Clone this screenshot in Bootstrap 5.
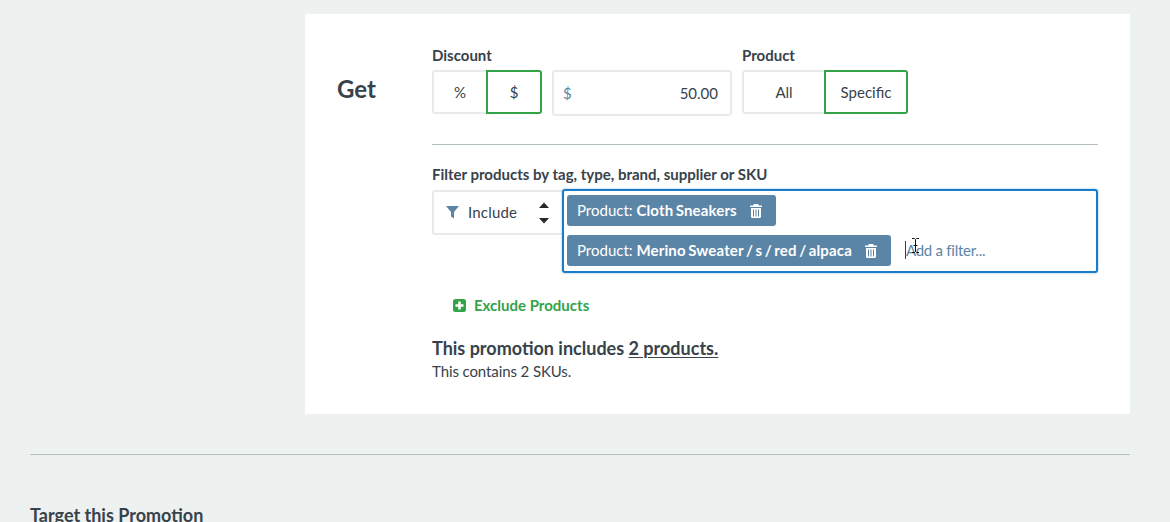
<!DOCTYPE html>
<html>
<head>
    <title>Promotion</title>
    <link href="https://cdn.jsdelivr.net/npm/bootstrap@5.3.2/dist/css/bootstrap.min.css" rel="stylesheet">
    <script src="https://cdn.jsdelivr.net/npm/bootstrap@5.3.2/dist/js/bootstrap.bundle.min.js"></script>
    <style>
        body {
            background-color: #edf1f0;
            color: #37424a;
            font-family: "Lato", "Liberation Sans", sans-serif;
            font-size: 15px;
            height: 522px;
            overflow: hidden;
        }
        .page-wrap {
            padding: 14px 40px 0 30px;
        }
        .promo-panel {
            margin-left: 275px;
            height: 400px;
            background: #fff;
            padding: 32px 32px 0 32px;
        }
        .get-title {
            width: 95px;
            flex: none;
            font-size: 24px;
            font-weight: 700;
            line-height: 28px;
            padding-top: 29px;
        }
        .field-label {
            font-weight: 700;
            font-size: 15px;
            line-height: 18px;
            margin-bottom: 6px;
        }
        .seg-group {
            display: flex;
            height: 44px;
        }
        .seg-btn {
            display: flex;
            align-items: center;
            justify-content: center;
            background: #fff;
            border: 2px solid #e7ebee;
            border-radius: 3px 0 0 3px;
            color: #37424a;
            padding: 0;
            font-size: 15px;
        }
        .seg-btn.picked {
            border-color: #34a249;
            border-radius: 0 3px 3px 0;
        }
        .w-pct { width: 54px; border-right: 0; }
        .w-usd { width: 56px; }
        .w-all { width: 82px; border-right: 0; }
        .w-spec { width: 84px; }
        .amount-box {
            width: 180px;
            height: 46px;
            margin-left: 10px;
            margin-right: 10px;
            border: 2px solid #e7ebee;
            border-radius: 3px;
            padding: 0 12px 0 9px;
        }
        .amount-unit { color: #5b85a6; }
        .head-row { height: 69px; }
        .rule-line {
            margin: 29px 0 20px;
            border: 0;
            border-top: 1px solid #b4bfc4;
            opacity: 1;
        }
        .include-box {
            width: 130px;
            height: 45px;
            flex: none;
            margin-top: 1px;
            border: 2px solid #e7ebee;
            border-right: 0;
            border-radius: 3px 0 0 3px;
            padding: 0 12px 0 12px;
        }
        .include-text {
            margin-left: 1px;
            letter-spacing: .2px;
        }
        .filter-box {
            flex: 1;
            height: 84px;
            border: 2px solid #1a7bc9;
            border-radius: 3px;
            padding: 4px 3px;
            position: relative;
            box-shadow: 0 0 2px rgba(26, 123, 201, .6);
        }
        .tag-row { margin-bottom: 9px; }
        .filter-tag {
            display: inline-flex;
            align-items: center;
            height: 31px;
            padding: 0 14px 0 10px;
            background: #5b85a6;
            color: #fff;
            border-radius: 3px;
        }
        .filter-tag b {
            font-weight: 700;
            letter-spacing: .14px;
            word-spacing: -1.3px;
        }
        .filter-tag svg { margin-left: 13px; }
        .filter-hint {
            color: #5b85a6;
            margin-left: 14px;
            margin-bottom: 2px;
            border-left: 1px solid #37424a;
            line-height: 18px;
            letter-spacing: -.25px;
        }
        .cursor-mark {
            position: absolute;
            left: 347px;
            top: 47px;
        }
        .exclude-link {
            color: #34a249;
            font-weight: 700;
            font-size: 15px;
            margin: 22px 0 0 21px;
            line-height: 20px;
        }
        .summary-head {
            font-size: 18px;
            font-weight: 700;
            line-height: 24px;
            margin-top: 21px;
        }
        .summary-head u { text-underline-offset: 2px; }
        .summary-sub {
            line-height: 22px;
            letter-spacing: -.1px;
        }
        .page-rule {
            margin: 40px 0 0;
            border: 0;
            border-top: 1px solid #b4bfc4;
            opacity: 1;
        }
        .target-title {
            font-size: 18px;
            font-weight: 700;
            margin-top: 48px;
            line-height: 24px;
        }
    </style>
</head>
<body>
    <div class="page-wrap">
        <div class="promo-panel d-flex">
            <div class="get-title">Get</div>
            <div class="flex-grow-1">
                <div class="d-flex head-row">
                    <div>
                        <div class="field-label">Discount</div>
                        <div class="d-flex">
                            <div class="seg-group">
                                <button class="seg-btn w-pct" type="button">%</button>
                                <button class="seg-btn picked w-usd" type="button">$</button>
                            </div>
                            <div class="amount-box d-flex align-items-center justify-content-between">
                                <span class="amount-unit">$</span>
                                <span>50.00</span>
                            </div>
                        </div>
                    </div>
                    <div>
                        <div class="field-label">Product</div>
                        <div class="seg-group">
                            <button class="seg-btn w-all" type="button">All</button>
                            <button class="seg-btn picked w-spec" type="button">Specific</button>
                        </div>
                    </div>
                </div>
                <hr class="rule-line">
                <div class="field-label">Filter products by tag, type, brand, supplier or SKU</div>
                <div class="d-flex">
                    <div class="include-box d-flex align-items-center">
                        <svg width="13" height="13" viewBox="0 0 13 13" class="me-2"><path d="M0 0h13L8 6v6.500L5 10.500V6z" fill="#5b85a6"/></svg>
                        <span class="flex-grow-1 include-text">Include</span>
                        <svg width="12" height="24" viewBox="0 0 12 24"><path d="M6 1.500l5 5.500H1zM6 22.500L1 17h10z" fill="#22292e"/></svg>
                    </div>
                    <div class="filter-box">
                        <div class="tag-row d-flex">
                            <span class="filter-tag">Product:&nbsp;<b>Cloth Sneakers</b>
                                <svg width="12" height="14" viewBox="0 0 12 14"><path fill="#fff" fill-rule="evenodd" d="M4 0h4l1 1.500h3V3H0V1.500h3zM1 4h10v8.500A1.500 1.500 0 0 1 9.500 14h-7A1.500 1.500 0 0 1 1 12.500zM3 5.500v7h1v-7zM5.500 5.500v7h1v-7zM8 5.500v7h1v-7z"/></svg>
                            </span>
                        </div>
                        <div class="d-flex align-items-center">
                            <span class="filter-tag">Product:&nbsp;<b>Merino Sweater / s / red / alpaca</b>
                                <svg width="12" height="14" viewBox="0 0 12 14"><path fill="#fff" fill-rule="evenodd" d="M4 0h4l1 1.500h3V3H0V1.500h3zM1 4h10v8.500A1.500 1.500 0 0 1 9.500 14h-7A1.500 1.500 0 0 1 1 12.500zM3 5.500v7h1v-7zM5.500 5.500v7h1v-7zM8 5.500v7h1v-7z"/></svg>
                            </span>
                            <span class="filter-hint">Add a filter...</span>
                        </div>
                        <svg class="cursor-mark" width="9" height="15" viewBox="0 0 9 15"><path d="M1 .5h2.500l1 1 1-1H8M4.500 1.500v12M1 14.500h2.500l1-1 1 1H8M2.500 7.500h4" fill="none" stroke="#111" stroke-width="1"/></svg>
                    </div>
                </div>
                <div class="exclude-link d-flex align-items-center">
                    <svg width="13" height="13" viewBox="0 0 13 13" class="me-2"><rect width="13" height="13" rx="2.500" fill="#34a249"/><path d="M5.250 2.500h2.500v2.750h2.750v2.500H7.750v2.750h-2.500V7.750H2.500v-2.500h2.750z" fill="#fff"/></svg>
                    Exclude Products
                </div>
                <div class="summary-head">This promotion includes <u>2 products.</u></div>
                <div class="summary-sub">This contains 2 SKUs.</div>
            </div>
        </div>
        <hr class="page-rule">
        <div class="target-title">Target this Promotion</div>
    </div>
</body>
</html>
